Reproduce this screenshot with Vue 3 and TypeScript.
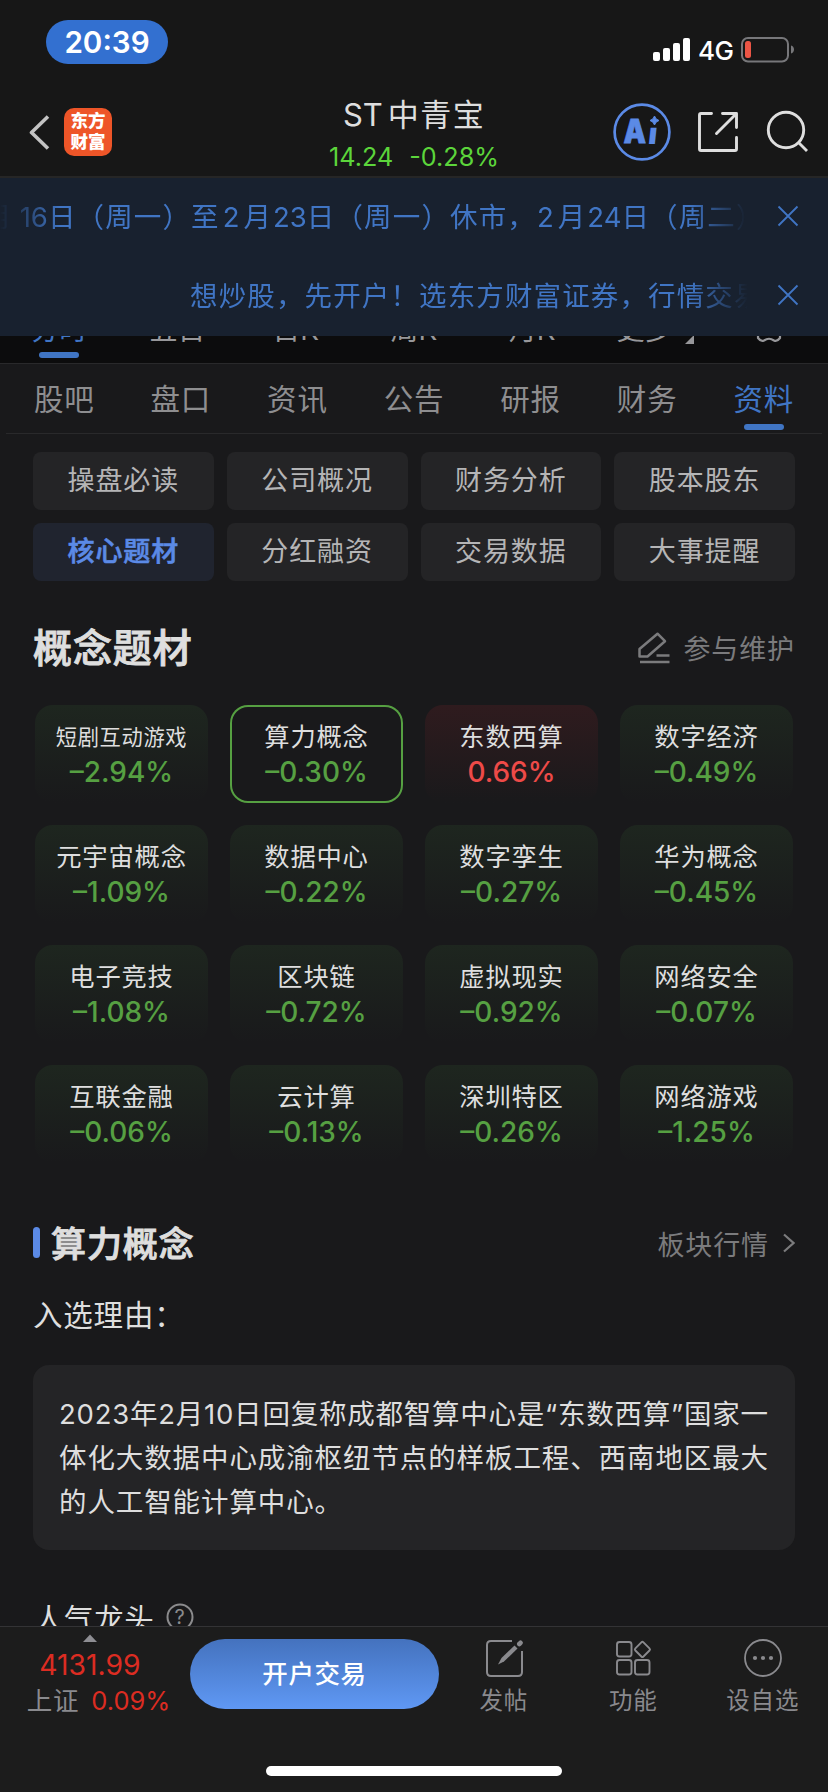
<script setup lang="ts">
interface Concept {
  name: string
  change: string
  small?: boolean
  state?: 'up' | 'selected'
}

const periods: string[] = ['分时', '五日', '日K', '周K', '月K']
const tabs: string[] = ['股吧', '盘口', '资讯', '公告', '研报', '财务', '资料']
const activeTab = '资料'
const topics: string[] = ['操盘必读', '公司概况', '财务分析', '股本股东', '核心题材', '分红融资', '交易数据', '大事提醒']
const activeTopic = '核心题材'

const concepts: Concept[] = [
  { name: '短剧互动游戏', change: '–2.94%', small: true },
  { name: '算力概念', change: '–0.30%', state: 'selected' },
  { name: '东数西算', change: '0.66%', state: 'up' },
  { name: '数字经济', change: '–0.49%' },
  { name: '元宇宙概念', change: '–1.09%' },
  { name: '数据中心', change: '–0.22%' },
  { name: '数字孪生', change: '–0.27%' },
  { name: '华为概念', change: '–0.45%' },
  { name: '电子竞技', change: '–1.08%' },
  { name: '区块链', change: '–0.72%' },
  { name: '虚拟现实', change: '–0.92%' },
  { name: '网络安全', change: '–0.07%' },
  { name: '互联金融', change: '–0.06%' },
  { name: '云计算', change: '–0.13%' },
  { name: '深圳特区', change: '–0.26%' },
  { name: '网络游戏', change: '–1.25%' },
]

const reasonLines: string[] = [
  '2023年2月10日回复称成都智算中心是“东数西算”国家一',
  '体化大数据中心成渝枢纽节点的样板工程、西南地区最大',
  '的人工智能计算中心。',
]
</script>

<template>
  <div class="screen">
    <div class="status">
      <div class="clock">20:39</div>
      <div class="status-right">
        <svg class="signal" width="38" height="24" viewBox="0 0 38 24" fill="#fff">
          <rect x="0" y="14" width="7" height="9" rx="2" />
          <rect x="10" y="10" width="7" height="13" rx="2" />
          <rect x="20" y="5" width="7" height="18" rx="2" />
          <rect x="30" y="0" width="7" height="23" rx="2" />
        </svg>
        <span class="network">4G</span>
        <svg class="battery" width="54" height="26" viewBox="0 0 54 26">
          <rect x="1" y="1" width="46" height="23.5" rx="6" fill="none" stroke="#77777a" stroke-width="2" />
          <rect x="4" y="4" width="6" height="17" rx="2.5" fill="#eb5545" />
          <path d="M50 8.500C54 9.500 54 15.500 50 16.500Z" fill="#77777a" />
        </svg>
      </div>
    </div>

    <header class="nav">
      <div class="nav-left">
        <svg width="22" height="36" viewBox="0 0 22 36" fill="none" stroke="#c3c3c3" stroke-width="3.6">
          <path d="M19 1.500L2.500 17.500L19 33.500" stroke-linejoin="round" />
        </svg>
        <div class="logo"><span>东方</span><span>财富</span></div>
      </div>
      <div class="stock">
        <div class="stock-name"><span class="st">ST</span>中青宝</div>
        <div class="stock-quote"><span>14.24</span><span>-0.28%</span></div>
      </div>
      <div class="nav-icons">
        <svg width="58" height="58" viewBox="0 0 58 58">
          <circle cx="29" cy="29" r="27.400" fill="none" stroke="#5b8ae6" stroke-width="2.700" />
          <g fill="#5b8ae6" font-family="Inter, sans-serif" font-weight="900">
            <text x="10.500" y="40" font-size="33" textLength="22.500" lengthAdjust="spacingAndGlyphs" stroke="#5b8ae6" stroke-width="0.800">A</text>
            <text transform="translate(34.500 41) skewX(-6)" font-size="30">ı</text>
            <path d="M41.500 13Q42.500 16.500 46 17.500Q42.500 18.500 41.500 22Q40.500 18.500 37 17.500Q40.500 16.500 41.500 13Z" stroke="#5b8ae6" stroke-width="1" />
          </g>
        </svg>
        <svg width="42" height="42" viewBox="0 0 42 42" fill="none" stroke="#dedede" stroke-width="2.900" stroke-linecap="round" stroke-linejoin="round">
          <path d="M14.500 2.500H4Q2.500 2.500 2.500 4V38Q2.500 39.500 4 39.500H38Q39.500 39.500 39.500 38V26.500" />
          <path d="M25.500 2.500H39.500V16.500M39 3L19.500 22.500" />
        </svg>
        <svg width="44" height="44" viewBox="0 0 44 44" fill="none" stroke="#dedede" stroke-width="2.900">
          <circle cx="21" cy="21" r="17.700" />
          <path d="M33 33L42 42" />
        </svg>
      </div>
    </header>

    <section class="notices">
      <div class="notice">
        <div class="ticker fade-both">
          <p class="ticker-first">月<i>16</i>日（周一）至<i class="digit">2</i>月<i>23</i>日（周一）休市，<i class="digit tight">2</i>月<i>24</i>日（周二）</p>
        </div>
        <svg class="close" width="22" height="22" viewBox="0 0 22 22" fill="none" stroke="#4075c4" stroke-width="1.800"><path d="M1.500 1.500L20.500 20.500M20.500 1.500L1.500 20.500" /></svg>
      </div>
      <div class="notice">
        <div class="ticker fade-right">
          <p class="ticker-second">想炒股，先开户！选东方财富证券，行情交易</p>
        </div>
        <svg class="close" width="22" height="22" viewBox="0 0 22 22" fill="none" stroke="#4075c4" stroke-width="1.800"><path d="M1.500 1.500L20.500 20.500M20.500 1.500L1.500 20.500" /></svg>
      </div>
    </section>

    <nav class="periods">
      <span v-for="(p, i) in periods" :key="p" :class="{ on: i === 0 }">{{ p }}</span>
      <span class="more">更多<svg width="9" height="9" viewBox="0 0 9 9"><path d="M9 0V9H0Z" fill="#97979a" /></svg></span>
      <span>
        <svg class="gear" width="26" height="26" viewBox="0 0 26 26" fill="none" stroke="#97979a" stroke-width="2.200">
          <path d="M2 19V21Q5 25 8 23.500Q13 20 18 23.500Q21 25 24 21V19M2 19V7Q5 3 8 4.500Q13 8 18 4.500Q21 3 24 7V19" />
        </svg>
      </span>
    </nav>

    <nav class="tabs">
      <span v-for="t in tabs" :key="t" :class="{ on: t === activeTab }">{{ t }}</span>
    </nav>

    <main class="content">
      <div class="topics">
        <div v-for="t in topics" :key="t" class="topic" :class="{ on: t === activeTopic }">{{ t }}</div>
      </div>

      <div class="heading">
        <h2>概念题材</h2>
        <div class="aside">
          <svg width="32" height="32" viewBox="0 0 32 32" fill="none" stroke="#7b7b7d" stroke-width="2.500">
            <path d="M1.500 24.500V17L19.500 1.700L27 9.200L9.500 24.500Z" stroke-linejoin="round" />
            <path d="M18.500 23.500H31.500M2 30H31.500" />
          </svg>
          <span>参与维护</span>
        </div>
      </div>

      <div class="concepts">
        <div v-for="c in concepts" :key="c.name" class="concept" :class="c.state">
          <div class="concept-name" :class="{ small: c.small }">{{ c.name }}</div>
          <div class="concept-change">{{ c.change }}</div>
        </div>
      </div>

      <div class="detail-head">
        <h3>算力概念</h3>
        <div class="aside">
          <span>板块行情</span>
          <svg width="12" height="20" viewBox="0 0 12 20" fill="none" stroke="#7b7b7d" stroke-width="2.200"><path d="M1 1.500L10.500 10L1 18.500" /></svg>
        </div>
      </div>

      <p class="label">入选理由：</p>
      <div class="reason">
        <p v-for="line in reasonLines" :key="line">{{ line }}</p>
      </div>

      <div class="leaders">
        <span>人气龙头</span>
        <svg width="28" height="28" viewBox="0 0 28 28" fill="none">
          <circle cx="14" cy="14" r="12.500" stroke="#8b8b8d" stroke-width="2" />
          <text x="14" y="21" text-anchor="middle" font-family="Inter, sans-serif" font-size="20" fill="#8b8b8d">?</text>
        </svg>
      </div>
    </main>

    <footer class="bottom">
      <div class="bar">
        <div class="index">
          <svg width="14" height="8" viewBox="0 0 14 8"><path d="M7 0.500L14 8H0Z" fill="#8e8e93" /></svg>
          <div class="index-value">4131.99</div>
          <div class="index-row"><span>上证</span><b>0.09%</b></div>
        </div>
        <div class="trade">开户交易</div>
        <div class="actions">
          <div class="action">
            <svg width="38" height="38" viewBox="0 0 38 38" fill="none" stroke="#8a8a8e" stroke-width="2">
              <path d="M27 2H6Q2 2 2 6V33Q2 37 6 37H33Q37 37 37 33V12" />
              <path d="M13 25.500L16.500 19L29.500 6.500L32.500 9.500L19 22.500Z" fill="#8a8a8e" stroke="none" />
              <path d="M34.300 5L35.500 3.800" stroke-width="4.600" stroke-linecap="round" />
            </svg>
            <span>发帖</span>
          </div>
          <div class="action">
            <svg width="38" height="38" viewBox="0 0 38 38" fill="none" stroke="#8a8a8e" stroke-width="1.900" stroke-linejoin="round">
              <rect x="3" y="3" width="14.500" height="14.500" rx="2.500" />
              <rect x="3" y="21" width="14.500" height="14.500" rx="2.500" />
              <rect x="21" y="21" width="14.500" height="14.500" rx="2.500" />
              <rect x="22.700" y="4.700" width="11.500" height="11.500" rx="1.500" transform="rotate(45 28.450 10.400)" />
            </svg>
            <span>功能</span>
          </div>
          <div class="action">
            <svg width="40" height="38" viewBox="0 0 40 38">
              <circle cx="20" cy="19" r="18" fill="none" stroke="#8a8a8e" stroke-width="1.800" />
              <g fill="#8a8a8e"><circle cx="12" cy="19" r="2.100" /><circle cx="20" cy="19" r="2.100" /><circle cx="28" cy="19" r="2.100" /></g>
            </svg>
            <span>设自选</span>
          </div>
        </div>
      </div>
      <div class="home"></div>
    </footer>
  </div>
</template>

<style>
body {
  background: #19191b;
}
</style>

<style scoped>
* {
  box-sizing: border-box;
}
p, h2, h3 {
  margin: 0;
}
svg {
  display: block;
  flex: none;
}
.screen {
  width: 828px;
  height: 1792px;
  overflow: hidden;
  display: flex;
  flex-direction: column;
  background: #19191b;
  font-family: Inter, "Noto Sans CJK SC", sans-serif;
  font-weight: 400;
  white-space: nowrap;
  text-autospace: no-autospace;
}
.status {
  height: 88px;
  flex: none;
  background: #171717;
  display: flex;
  justify-content: space-between;
  padding: 20px 33px 0 46px;
}
.clock {
  width: 122px;
  height: 44px;
  border-radius: 22px;
  background: #3370d0;
  color: #fff;
  font-size: 29.6px;
  font-weight: 600;
  line-height: 45px;
  text-align: center;
}
.status-right {
  display: flex;
  color: #fff;
  padding-top: 17px;
}
.signal {
  margin-top: 1px;
}
.network {
  font-size: 26px;
  font-weight: 500;
  line-height: 27px;
  width: 50px;
  padding-left: 7px;
  letter-spacing: -0.5px;
}
.nav {
  height: 90px;
  flex: none;
  background: #171717;
  border-bottom: 2px solid #262626;
  display: grid;
  grid-template-columns: 300px 228px 300px;
}
.nav-left {
  display: flex;
  padding: 20px 0 0 29px;
}
.nav-left svg {
  margin: 7px 13px 0 0;
}
.logo {
  width: 48px;
  height: 48px;
  border-radius: 10px;
  background: #ee5528;
  color: #fff;
  font-size: 17.5px;
  font-weight: 900;
  line-height: 20.5px;
  padding-top: 3px;
  display: flex;
  flex-direction: column;
  align-items: center;
}
.stock {
  display: flex;
  flex-direction: column;
  align-items: center;
  color: #dedede;
}
.stock-name {
  font-size: 31px;
  line-height: 40px;
  letter-spacing: 1.4px;
  margin-top: 7px;
}
.st {
  margin-right: 5px;
  letter-spacing: 0;
}
.stock-quote {
  display: flex;
  gap: 16px;
  font-size: 25.2px;
  line-height: 30px;
  margin-top: 7px;
  color: #5cd53b;
}
.nav-icons {
  display: flex;
  padding: 15px 0 0 85px;
}
.nav-icons svg:nth-child(2) {
  margin: 8px 0 0 26px;
}
.nav-icons svg:nth-child(3) {
  margin: 6px 0 0 26px;
}
.notices {
  height: 158px;
  flex: none;
  background: #18212f;
}
.notice {
  height: 82px;
  display: flex;
  align-items: center;
  justify-content: space-between;
  padding-right: 29px;
  color: #4075c4;
  font-size: 27.5px;
  letter-spacing: 1.13px;
}
.notice:first-child {
  height: 76px;
}
.ticker {
  width: 750px;
  overflow: hidden;
  margin-bottom: 2px;
}
.fade-both {
  mask-image: linear-gradient(90deg, transparent 0, #000 60px, #000 690px, transparent 746px);
}
.fade-right {
  mask-image: linear-gradient(90deg, #000 690px, transparent 748px);
}
.ticker-first {
  margin-left: -16px;
}
.ticker-first i {
  font-style: normal;
  letter-spacing: 0;
  margin-left: 1px;
}
.ticker-first i:first-child {
  margin-left: 7px;
}
.ticker-first .digit {
  margin: 0 4px 0 3px;
}
.ticker-first .tight {
  margin-left: 1px;
}
.ticker-second {
  margin-left: 190px;
}
.periods {
  height: 28px;
  flex: none;
  background: #0c0c0d;
  border-bottom: 1px solid #29292b;
  overflow: hidden;
  display: grid;
  grid-template-columns: repeat(7, 1fr);
  color: #97979a;
  font-size: 28px;
}
.periods > span {
  display: flex;
  flex-direction: column;
  align-items: center;
  line-height: 40px;
  margin-top: -26px;
}
.periods .more {
  flex-direction: row;
  justify-content: center;
  align-items: flex-end;
  height: 40px;
  gap: 12px;
  padding-left: 9px;
}
.periods .more svg {
  margin-bottom: 6px;
}
.gear {
  margin-top: 7px;
}
.on::after {
  content: "";
  width: 40px;
  height: 6px;
  border-radius: 3px;
  background: #4075c4;
}
.periods .on {
  color: #4075c4;
}
.periods .on::after {
  margin-top: 2px;
}
.tabs {
  height: 70px;
  flex: none;
  margin: 0 6px;
  border-bottom: 1px solid #29292b;
  display: grid;
  grid-template-columns: repeat(7, 1fr);
  color: #8e8e90;
  font-size: 29.5px;
  letter-spacing: 0.8px;
}
.tabs span {
  display: flex;
  flex-direction: column;
  align-items: center;
  line-height: 44px;
  padding-top: 13px;
}
.tabs .on {
  color: #4075c4;
}
.tabs .on::after {
  margin-top: 3px;
}
.content {
  padding: 18px 33px 0;
  height: 1192px;
  flex: none;
  overflow: hidden;
}
.topics {
  display: grid;
  grid-template-columns: repeat(4, 1fr);
  gap: 13px;
}
.topic {
  height: 58px;
  border-radius: 8px;
  background: #242426;
  color: #b5b5b6;
  font-size: 27px;
  letter-spacing: 0.9px;
  line-height: 58px;
  text-align: center;
}
.topic.on {
  background: #20242f;
  color: #5b8ae6;
  font-weight: 500;
  -webkit-text-stroke: 0.6px #5b8ae6;
}
.topic.on::after {
  content: none;
}
.heading {
  height: 124px;
  display: flex;
  justify-content: space-between;
  align-items: center;
  padding-top: 8px;
}
.heading h2 {
  font-size: 39px;
  letter-spacing: 0.9px;
  font-weight: 500;
  color: #dedede;
  -webkit-text-stroke: 0.9px #dedede;
  margin-bottom: 5px;
}
.aside {
  display: flex;
  align-items: center;
  color: #7b7b7d;
  font-size: 27px;
  letter-spacing: 0.9px;
}
.heading .aside {
  margin-top: 1px;
}
.aside span + svg {
  margin-left: 14px;
}
.aside svg + span {
  margin-left: 13px;
}
.concepts {
  display: grid;
  grid-template-columns: repeat(4, 173px);
  gap: 22px;
  padding-left: 2px;
}
.concept {
  height: 98px;
  border-radius: 18px;
  padding-top: 15px;
  text-align: center;
  color: #56a042;
  background: linear-gradient(180deg, #1e261f, #19191b);
}
.concept.up {
  color: #ee4a48;
  background: linear-gradient(180deg, #2f1b1e, #19191b);
}
.concept.selected {
  background: transparent;
  box-shadow: inset 0 0 0 2px #56a042;
}
.concept-name {
  height: 34px;
  line-height: 34px;
  font-size: 25.3px;
  letter-spacing: 0.8px;
  color: #dedede;
}
.concept-name.small {
  font-size: 21.3px;
  letter-spacing: 0.6px;
}
.concept-change {
  font-size: 28px;
  font-weight: 500;
  line-height: 37px;
}
.detail-head {
  display: flex;
  justify-content: space-between;
  align-items: center;
  margin-top: 50px;
  height: 60px;
}
.detail-head h3 {
  display: flex;
  align-items: center;
  font-size: 35px;
  font-weight: 500;
  letter-spacing: 0.9px;
  color: #dedede;
  -webkit-text-stroke: 0.9px #dedede;
  margin-bottom: 4px;
}
.detail-head h3::before {
  content: "";
  width: 7px;
  height: 31px;
  border-radius: 3.5px;
  background: #5b8ae6;
  margin: 2px 11px 0 0;
}
.label {
  margin-top: 20px;
  height: 72px;
  line-height: 44px;
  color: #dedede;
  font-size: 29.500px;
  letter-spacing: 0.8px;
}
.reason {
  height: 185px;
  border-radius: 16px;
  background: #242426;
  padding: 27px 26px 0;
  color: #dedede;
  font-size: 27.5px;
  letter-spacing: 0.9px;
  line-height: 44px;
}
.reason p:first-child {
  letter-spacing: 0.77px;
}
.leaders {
  display: flex;
  align-items: center;
  height: 44px;
  margin-top: 45px;
  padding-left: 1px;
  font-size: 29.5px;
  letter-spacing: 0.6px;
  color: #dedede;
}
.leaders svg {
  margin-left: 12px;
}
.bottom {
  height: 166px;
  flex: none;
  background: #1c1c1c;
  border-top: 1px solid #333335;
}
.bar {
  display: flex;
  height: 139px;
}
.index {
  width: 190px;
  display: flex;
  flex-direction: column;
  align-items: center;
  padding: 7px 10px 0 0;
}
.index-value {
  font-size: 28.3px;
  line-height: 30px;
  margin-top: 8px;
  color: #dc2c22;
}
.index-row {
  display: flex;
  gap: 12px;
  line-height: 41px;
  font-size: 25.5px;
  color: #8a8a8e;
  margin-left: 17px;
}
.index-row span {
  letter-spacing: 0.8px;
}
.index-row b {
  font-weight: 400;
  color: #dc2c22;
}
.trade {
  width: 249px;
  height: 70px;
  border-radius: 35px;
  margin-top: 12px;
  background: linear-gradient(180deg, #4472be, #5f98f4);
  color: #fff;
  font-size: 25.5px;
  letter-spacing: 0.6px;
  font-weight: 500;
  text-align: center;
  line-height: 70px;
}
.actions {
  display: grid;
  grid-template-columns: repeat(3, 129.5px);
}
.action {
  display: flex;
  flex-direction: column;
  align-items: center;
  padding-top: 12px;
  color: #8a8a8e;
  font-size: 23.5px;
  letter-spacing: 0.8px;
}
.action span {
  line-height: 34px;
  margin-top: 7px;
}
.home {
  width: 296px;
  height: 10px;
  border-radius: 5px;
  background: #fff;
  margin: 0 auto;
}
</style>
